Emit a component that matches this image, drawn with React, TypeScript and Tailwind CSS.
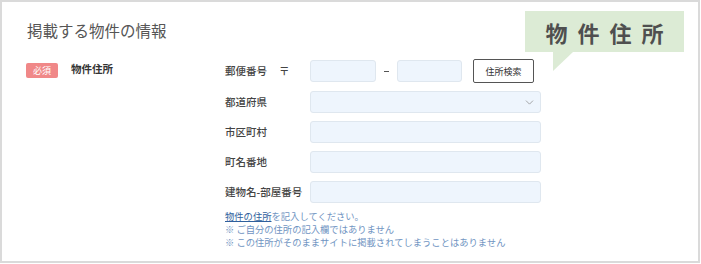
import { ChevronDown } from "lucide-react";

const font = { fontFamily: '"Noto Sans CJK JP", "Noto Sans", sans-serif' };

const Field = ({ label, select }: { label: string; select?: boolean }) => (
  <div className="flex items-center h-[22px]">
    <span className="w-[85px] text-[10.5px] font-medium text-[#444] leading-none">{label}</span>
    <div className="flex items-center justify-end w-[231px] h-[22px] pr-[4px] rounded-[3px] border border-[#dfe7ef] bg-[#eef5fd]">
      {select && <ChevronDown size={13} strokeWidth={1.4} className="text-[#8c8c8c]" />}
    </div>
  </div>
);

export default function App() {
  return (
    <div className="w-[701px] h-[264px] bg-white" style={font}>
      <div className="relative w-[700px] h-[263px] border-2 border-[#dadada] pl-[24px] pt-[19px]">
        {/* callout label */}
        <div className="absolute left-[523px] top-[9px]">
          <div className="flex items-center justify-center w-[159px] h-[41px] pl-[10px] bg-[#dcebd5] text-[22px] font-bold tracking-[10px] text-[#4f4f4f] leading-none">
            物件住所
          </div>
          <svg width="20" height="19" viewBox="0 0 20 19" className="ml-[28px] block">
            <polygon points="0,0 20,0 0,19" fill="#dcebd5" />
          </svg>
        </div>

        <h2 className="ml-px h-[18px] text-[15.5px] leading-[18px] text-[#555]">掲載する物件の情報</h2>

        <div className="flex mt-[21px]">
          <div className="flex items-start w-[199px]">
            <span className="mt-[3px] flex items-center justify-center w-[32px] h-[15px] rounded-[2px] bg-[#f08888] text-white text-[9px] leading-none">
              必須
            </span>
            <span className="ml-[13px] mt-[4px] text-[10.5px] font-bold text-[#333] leading-none">物件住所</span>
          </div>

          <div className="flex flex-col">
            <div className="flex items-center h-[22px]">
              <span className="flex w-[85px] text-[10.5px] font-medium text-[#444] leading-none">
                <span className="w-[54px]">郵便番号</span>
                <span>〒</span>
              </span>
              <div className="w-[66px] h-[22px] rounded-[3px] border border-[#dfe7ef] bg-[#eef5fd]" />
              <span className="flex justify-center w-[21px]">
                <span className="block w-[5px] h-px bg-[#555]" />
              </span>
              <div className="w-[65px] h-[22px] rounded-[3px] border border-[#dfe7ef] bg-[#eef5fd]" />
              <button className="ml-[11px] w-[61px] h-[24px] rounded-[2px] border border-[#555] bg-white text-[9px] text-[#333] leading-none">
                住所検索
              </button>
            </div>
            <div className="flex flex-col gap-[8px] mt-[9px]">
              <Field label="都道府県" select />
              <Field label="市区町村" />
              <Field label="町名番地" />
              <Field label="建物名-部屋番号" />
            </div>
            <div className="mt-[7px] text-[9.3px] leading-[13px] text-[#7094c2]">
              <p>
                <span className="text-[#2f5f9c] underline">物件の住所</span>を記入してください。
              </p>
              <p>※ ご自分の住所の記入欄ではありません</p>
              <p>※ この住所がそのままサイトに掲載されてしまうことはありません</p>
            </div>
          </div>
        </div>
      </div>
    </div>
  );
}
